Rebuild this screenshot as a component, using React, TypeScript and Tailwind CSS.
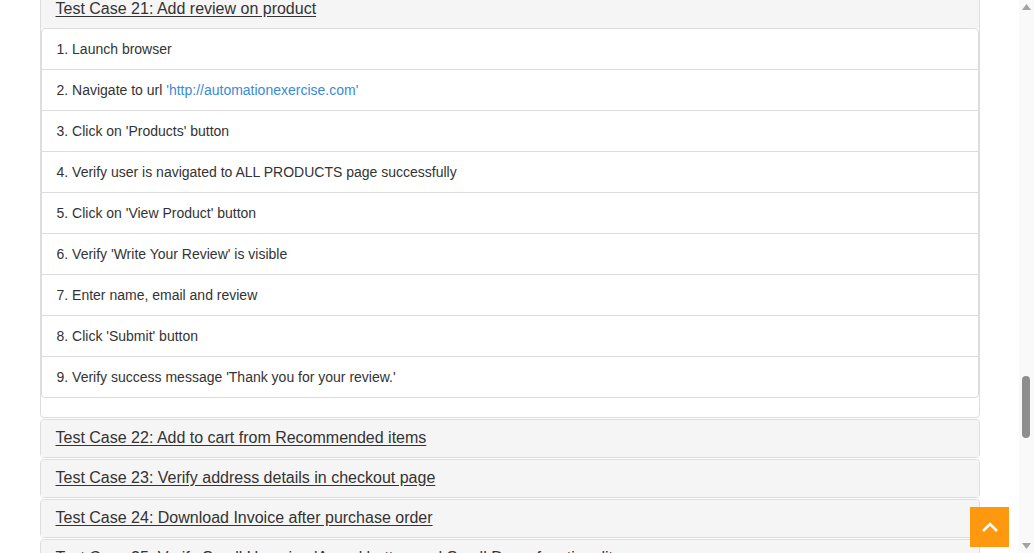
import React from "react";

const steps: React.ReactNode[] = [
  "1. Launch browser",
  <>
    2. Navigate to url{" "}
    <span className="text-[#3a8ad6]">'http://automationexercise.com'</span>
  </>,
  "3. Click on 'Products' button",
  "4. Verify user is navigated to ALL PRODUCTS page successfully",
  "5. Click on 'View Product' button",
  "6. Verify 'Write Your Review' is visible",
  "7. Enter name, email and review",
  "8. Click 'Submit' button",
  "9. Verify success message 'Thank you for your review.'",
];

const others = [
  "Test Case 22: Add to cart from Recommended items",
  "Test Case 23: Verify address details in checkout page",
  "Test Case 24: Download Invoice after purchase order",
  "Test Case 25: Verify Scroll Up using 'Arrow' button and Scroll Down functionality",
];

function Heading({ title }: { title: string }) {
  return (
    <div className="h-[37px] bg-[#f5f5f5] px-[15px] flex items-center rounded-t-[3px]">
      <a className="text-[16px] leading-[1.1] text-[#333] underline underline-offset-[2px] cursor-pointer -mt-[2px]">
        {title}
      </a>
    </div>
  );
}

export default function App() {
  return (
    <div className="relative h-[553px] w-[1034px] overflow-hidden bg-white font-['Liberation_Sans',Arial,sans-serif] flex">
      <div className="flex-1 overflow-hidden">
        <div className="w-[970px] mx-auto px-[15px] -mt-[10px]">
          <div className="border border-[#ddd] rounded-[4px] bg-white">
            <Heading title="Test Case 21: Add review on product" />
            <ul className="border border-[#ddd] rounded-[4px] mb-[19px] bg-white">
              {steps.map((s, i) => (
                <li
                  key={i}
                  className={`py-[10px] px-[15px] leading-[20px] text-[14px] text-[#333] ${
                    i > 0 ? "border-t border-[#ddd]" : ""
                  }`}
                >
                  {s}
                </li>
              ))}
            </ul>
          </div>
          {others.map((t) => (
            <div key={t} className="mt-px border border-[#ddd] rounded-[4px] bg-[#f5f5f5]">
              <Heading title={t} />
            </div>
          ))}
        </div>
      </div>
      <div className="w-[15px] h-full bg-[#f9f9f9] flex flex-col items-center justify-between py-[4px]">
        <svg width="9" height="6" viewBox="0 0 9 6">
          <polygon points="4.5,0 9,6 0,6" fill="#a3a3a3" />
        </svg>
        <div className="flex-1 w-full relative">
          <div className="absolute left-[3px] top-[366px] w-[8px] h-[62px] rounded-full bg-[#8e8e8e]" />
        </div>
        <svg width="9" height="6" viewBox="0 0 9 6">
          <polygon points="0,0 9,0 4.5,6" fill="#a3a3a3" />
        </svg>
      </div>
      <button className="absolute left-[970px] top-[507px] w-[39px] h-[40px] bg-[#fe980f] flex items-center justify-center">
        <svg width="18" height="12" viewBox="0 0 18 12" fill="none">
          <path d="M2 10 L9 3 L16 10" stroke="white" strokeWidth="2.6" />
        </svg>
      </button>
    </div>
  );
}
